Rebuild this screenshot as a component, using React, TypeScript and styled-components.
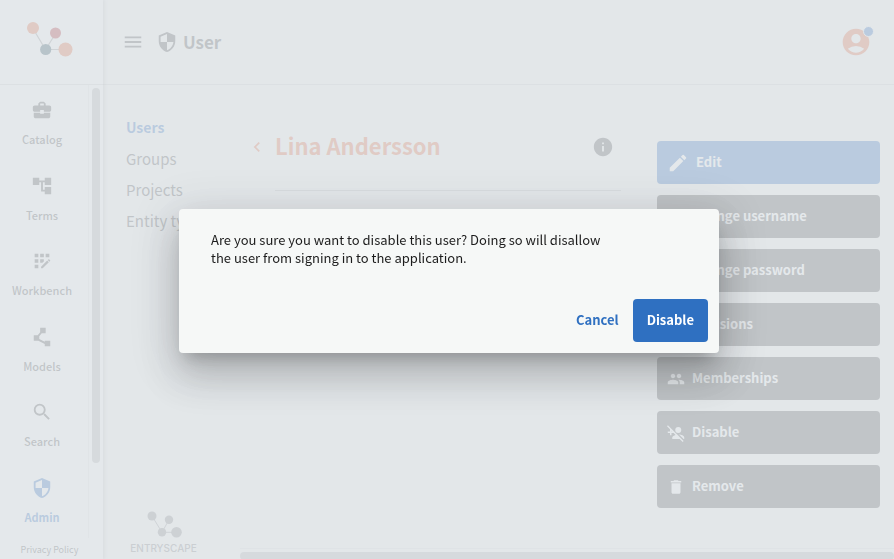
import React from "react";
import styled, { createGlobalStyle } from "styled-components";
import type { IconType } from "react-icons";
import {
  MdAccountCircle,
  MdAccountTree,
  MdAppRegistration,
  MdBusinessCenter,
  MdChevronLeft,
  MdDelete,
  MdEdit,
  MdHistory,
  MdInfo,
  MdLock,
  MdMenu,
  MdPeople,
  MdPerson,
  MdPersonAddDisabled,
  MdPolyline,
  MdSearch,
  MdSecurity,
} from "react-icons/md";

const color = {
  surface: "#ffffff",
  page: "#f7f7f6",
  paper: "#f6f8f7",
  text: "#4f4f4f",
  line: "#d6d6d6",
  thumb: "#b8b8b8",
  blue: "#2f70c1",
  orange: "#ea6e40",
  red: "#b42830",
  slate: "#244c5a",
};

const GlobalStyle = createGlobalStyle`
  *, *::before, *::after { box-sizing: border-box; }
  body {
    margin: 0;
    font-family: "Noto Sans CJK SC", "Noto Sans", sans-serif;
    color: ${color.text};
    background: ${color.page};
  }
  button { font: inherit; border: 0; padding: 0; background: none; color: inherit; cursor: pointer; }
  a { color: inherit; text-decoration: none; }
  svg { display: block; flex: none; }
`;

const Shell = styled.div`
  display: grid;
  grid-template-columns: 103px minmax(0, 1fr);
  height: 100vh;
  overflow: hidden;
`;

const Sidebar = styled.aside`
  display: flex;
  flex-direction: column;
  background: ${color.surface};
  box-shadow: 2px 0 3px rgba(0, 0, 0, 0.16);
  z-index: 1;
`;

const Brand = styled.a`
  display: flex;
  align-items: center;
  justify-content: center;
  height: 85px;
  padding: 0 6px 6px 0;
  border-bottom: 1px solid ${color.line};
`;

const SidebarBody = styled.div`
  flex: 1;
  display: flex;
  min-height: 0;
`;

const Nav = styled.nav`
  flex: 1;
  display: flex;
  flex-direction: column;
  padding-right: 4px;
`;

const NavItem = styled.a<{ $active?: boolean }>`
  flex: 1;
  display: flex;
  flex-direction: column;
  align-items: center;
  padding-top: 14px;
  gap: 9px;
  font-size: 11px;
  line-height: 18px;
  font-weight: ${(p) => (p.$active ? 700 : 500)};
  color: ${(p) => (p.$active ? color.blue : color.text)};
`;

const VerticalTrack = styled.div`
  width: 15px;
  padding: 3px;
  border-left: 1px solid #e9e9e9;
`;

const VerticalThumb = styled.div`
  width: 8px;
  height: 84%;
  border-radius: 4px;
  background: ${color.thumb};
`;

const Policy = styled.a`
  height: 21px;
  padding-right: 4px;
  text-align: center;
  font-size: 9px;
  line-height: 24px;
  font-weight: 400;
`;

const Page = styled.div`
  display: flex;
  flex-direction: column;
  min-width: 0;
`;

const Header = styled.header`
  display: flex;
  align-items: center;
  height: 85px;
  padding: 0 22px 0 19px;
  border-bottom: 1px solid ${color.line};
`;

const HeaderTitle = styled.h1`
  display: flex;
  align-items: center;
  gap: 5px;
  margin: 0 auto 0 12px;
  font-size: 17px;
  line-height: 24px;
  font-weight: 700;
`;

const Account = styled.button`
  position: relative;
  color: ${color.orange};
`;

const AccountBadge = styled.span`
  position: absolute;
  top: 0;
  right: -2px;
  width: 11px;
  height: 11px;
  border: 1px solid ${color.page};
  border-radius: 50%;
  background: ${color.blue};
`;

const Body = styled.div`
  flex: 1;
  display: flex;
  min-height: 0;
`;

const SubNav = styled.nav`
  display: flex;
  flex-direction: column;
  width: 137px;
  padding: 27px 0 5px 23px;
`;

const SubNavItem = styled.a<{ $active?: boolean }>`
  font-size: ${(p) => (p.$active ? 14 : 15)}px;
  line-height: 31px;
  white-space: nowrap;
  font-weight: ${(p) => (p.$active ? 700 : 400)};
  color: ${(p) => (p.$active ? color.blue : color.text)};
`;

const Footmark = styled.div`
  display: flex;
  flex-direction: column;
  align-items: center;
  gap: 4px;
  width: 75px;
  margin-top: auto;
  color: #808080;
  font-family: Inter, sans-serif;
  font-size: 10px;
  line-height: 12px;
  font-weight: 500;
`;

const Content = styled.div`
  flex: 1;
  display: flex;
  flex-direction: column;
  min-width: 0;
`;

const Detail = styled.main`
  flex: 1;
  display: flex;
  align-items: flex-start;
  gap: 36px;
  padding: 40px 14px 0 9px;
`;

const Profile = styled.section`
  flex: 1;
  display: grid;
  grid-template-columns: 16px minmax(0, 1fr);
  column-gap: 10px;
`;

const ProfileHead = styled.div`
  display: flex;
  align-items: center;
  justify-content: space-between;
  height: 66px;
  padding: 0 7px 22px 0;
  border-bottom: 1px solid #c4c4c4;
`;

const ProfileName = styled.h2`
  margin: 0;
  padding-bottom: 3px;
  font-size: 22px;
  line-height: 32px;
  font-weight: 700;
  color: ${color.orange};
`;

const BackButton = styled.button`
  display: flex;
  align-items: center;
  justify-content: center;
  height: 44px;
  color: ${color.orange};
`;

const Actions = styled.div`
  display: flex;
  flex-direction: column;
  gap: 11px;
  width: 223px;
  padding-top: 16px;
`;

const ActionButton = styled.button<{ $primary?: boolean }>`
  display: flex;
  align-items: center;
  gap: 7px;
  height: 43px;
  padding: 0 10px;
  border-radius: 4px;
  font-size: 13px;
  line-height: 20px;
  font-weight: 700;
  color: #ffffff;
  background: ${(p) => (p.$primary ? color.blue : color.text)};
`;

const ButtonLabel = styled.span`
  padding-bottom: 2px;
`;

const HorizontalTrack = styled.div`
  height: 11px;
  padding-top: 3px;
  border-top: 1px solid #e4e4e4;
  overflow: hidden;
`;

const HorizontalThumb = styled.div`
  height: 8px;
  border-radius: 4px;
  background: ${color.thumb};
`;

const Backdrop = styled.div`
  position: fixed;
  inset: 0;
  z-index: 10;
  display: flex;
  align-items: center;
  justify-content: center;
  padding: 3px 0 0 4px;
  background: rgba(221, 226, 230, 0.8);
`;

const Dialog = styled.div`
  width: 100%;
  max-width: 540px;
  border-radius: 4px;
  background: ${color.paper};
  box-shadow:
    0 11px 15px -7px rgba(0, 0, 0, 0.2),
    0 24px 38px 3px rgba(0, 0, 0, 0.14),
    0 9px 46px 8px rgba(0, 0, 0, 0.12);
`;

const DialogText = styled.p`
  max-width: 432px;
  margin: 0;
  padding: 22px 0 32px 32px;
  font-size: 13px;
  line-height: 18px;
  color: #1c1c1c;
`;

const DialogActions = styled.div`
  display: flex;
  justify-content: flex-end;
  padding: 0 11px 11px;
`;

const DialogButton = styled.button<{ $filled?: boolean }>`
  height: 43px;
  padding: 0 14px 2px;
  border-radius: 4px;
  font-size: 13px;
  line-height: 20px;
  font-weight: 700;
  color: ${(p) => (p.$filled ? "#ffffff" : color.blue)};
  background: ${(p) => (p.$filled ? color.blue : "transparent")};
`;

function BrandLogo() {
  return (
    <svg width="48" height="36" viewBox="0 0 48 36" role="img" aria-label="EntryScape">
      <path d="M8 7.500L20.500 28.500L31 12M20.500 28.500H40" fill="none" stroke="#999" strokeWidth="1.200" />
      <circle cx="8" cy="7" r="6" fill={color.orange} />
      <circle cx="30.500" cy="12" r="5.500" fill={color.red} />
      <circle cx="20.700" cy="28.500" r="5.600" fill={color.slate} />
      <circle cx="40.500" cy="28.500" r="7" fill={color.orange} />
    </svg>
  );
}

function FootLogo() {
  return (
    <svg width="36" height="28" viewBox="0 0 36 28" aria-hidden="true">
      <path d="M6 6L16 22.300L23 9.700M16 22.300H30.500" fill="none" stroke="#999" strokeWidth="1" />
      <g fill="#8a8a8a">
        <circle cx="6" cy="6" r="4.500" />
        <circle cx="23" cy="9.700" r="4.200" />
        <circle cx="16" cy="22.300" r="4.200" />
        <circle cx="30.500" cy="22.300" r="5.300" />
      </g>
    </svg>
  );
}

const modules: { label: string; icon: IconType; active?: boolean }[] = [
  { label: "Catalog", icon: MdBusinessCenter },
  { label: "Terms", icon: MdAccountTree },
  { label: "Workbench", icon: MdAppRegistration },
  { label: "Models", icon: MdPolyline },
  { label: "Search", icon: MdSearch },
  { label: "Admin", icon: MdSecurity, active: true },
];

const views = ["Users", "Groups", "Projects", "Entity types"];

const actions: { label: string; icon: IconType; primary?: boolean }[] = [
  { label: "Edit", icon: MdEdit, primary: true },
  { label: "Change username", icon: MdPerson },
  { label: "Change password", icon: MdLock },
  { label: "Revisions", icon: MdHistory },
  { label: "Memberships", icon: MdPeople },
  { label: "Disable", icon: MdPersonAddDisabled },
  { label: "Remove", icon: MdDelete },
];

export default function App() {
  return (
    <>
      <GlobalStyle />
      <Shell>
        <Sidebar>
          <Brand href="#">
            <BrandLogo />
          </Brand>
          <SidebarBody>
            <Nav aria-label="Modules">
              {modules.map(({ label, icon: Icon, active }) => (
                <NavItem key={label} href="#" $active={active}>
                  <Icon size={22} />
                  {label}
                </NavItem>
              ))}
            </Nav>
            <VerticalTrack>
              <VerticalThumb />
            </VerticalTrack>
          </SidebarBody>
          <Policy href="#">Privacy Policy</Policy>
        </Sidebar>

        <Page>
          <Header>
            <button aria-label="Menu">
              <MdMenu size={22} />
            </button>
            <HeaderTitle>
              <MdSecurity size={22} />
              User
            </HeaderTitle>
            <Account aria-label="Account">
              <MdAccountCircle size={32} />
              <AccountBadge />
            </Account>
          </Header>
          <Body>
            <SubNav aria-label="Admin views">
              {views.map((view, i) => (
                <SubNavItem key={view} href="#" $active={i === 0}>
                  {view}
                </SubNavItem>
              ))}
              <Footmark>
                <FootLogo />
                ENTRYSCAPE
              </Footmark>
            </SubNav>
            <Content>
              <Detail>
                <Profile>
                  <BackButton aria-label="Back">
                    <MdChevronLeft size={20} />
                  </BackButton>
                  <ProfileHead>
                    <ProfileName>Lina Andersson</ProfileName>
                    <button aria-label="Information">
                      <MdInfo size={22} />
                    </button>
                  </ProfileHead>
                </Profile>
                <Actions>
                  {actions.map(({ label, icon: Icon, primary }) => (
                    <ActionButton key={label} $primary={primary}>
                      <Icon size={primary ? 22 : 18} />
                      <ButtonLabel>{label}</ButtonLabel>
                    </ActionButton>
                  ))}
                </Actions>
              </Detail>
              <HorizontalTrack>
                <HorizontalThumb />
              </HorizontalTrack>
            </Content>
          </Body>
        </Page>
      </Shell>

      <Backdrop>
        <Dialog role="alertdialog" aria-modal="true" aria-describedby="confirm-text">
          <DialogText id="confirm-text">
            Are you sure you want to disable this user? Doing so will disallow the user from signing in to the
            application.
          </DialogText>
          <DialogActions>
            <DialogButton>Cancel</DialogButton>
            <DialogButton $filled>Disable</DialogButton>
          </DialogActions>
        </Dialog>
      </Backdrop>
    </>
  );
}
